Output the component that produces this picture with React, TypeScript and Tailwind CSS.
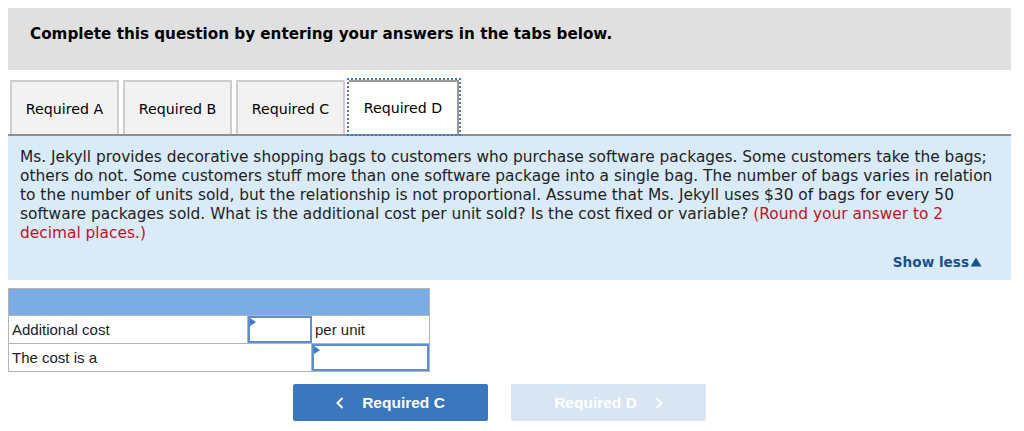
export default function App() {
  const tabs = ["Required A", "Required B", "Required C"];

  return (
    <div className="min-h-[431px] w-[1024px] bg-white pl-2 pr-[13px] pt-2 font-['DejaVu_Sans',Verdana,sans-serif] text-[#222]">
      <div className="flex h-[62px] items-center bg-[#e0e0e0] pb-[9px] pl-[22px]">
        <p className="text-[15.2px] font-bold text-black">Complete this question by entering your answers in the tabs below.</p>
      </div>

      <div className="mt-[10px] flex items-end border-b-2 border-[#8f8f8f] pl-[2px]">
        {tabs.map((t) => (
          <div
            key={t}
            className="mr-1 flex h-[54px] w-[109px] items-center justify-center border-2 border-b-0 border-[#cdcdcd] bg-[#f2f2f2] pt-[3px] text-[14.2px] text-black"
          >
            {t}
          </div>
        ))}
        <div className="-mb-[2px] -mt-[2px] ml-[-2px] h-[58px] w-[114px] border-2 border-dotted border-[#3d7bc8]">
          <div className="flex h-full items-center justify-center border-r-2 border-t-2 border-[#9a9a9a] bg-white pt-[1px] text-[14.2px] text-black">
            Required D
          </div>
        </div>
      </div>

      <div className="bg-[#d9ebf9] px-3 pb-[8px] pt-[12px]">
        <p className="text-[15.4px] leading-[19px] text-[#222]">
          Ms. Jekyll provides decorative shopping bags to customers who purchase software packages. Some customers take the bags; others do not. Some customers stuff more than one software package into a single bag. The number of bags varies in relation to the number of units sold, but the relationship is not proportional. Assume that Ms. Jekyll uses $30 of bags for every 50 software packages sold. What is the additional cost per unit sold? Is the cost fixed or variable?{" "}
          <span className="text-[#c1121c]">(Round your answer to 2 decimal places.)</span>
        </p>
        <div className="mt-[9px] flex justify-end pr-[17px]">
          <span className="flex items-center text-[13.6px] font-bold text-[#1c4f8f]">
            Show less
            <svg width="12" height="10" viewBox="0 0 12 10" className="ml-[1px]">
              <path d="M6 0.5L11.5 9.5H0.5Z" fill="#1c4f8f" />
            </svg>
          </span>
        </div>
      </div>

      <div className="mt-[8px] w-[422px] border border-[#b5b5b5] font-['Liberation_Sans',Arial,sans-serif] text-[15px] text-[#222]">
        <div className="h-[26px] bg-[#7aade4]" />
        <div className="flex h-[28px] border-t border-[#b5b5b5]">
          <div className="flex w-[239px] items-center border-r border-[#b5b5b5] pl-[3px]">Additional cost</div>
          <div className="relative w-[64px] border-2 border-[#5d8fcf] bg-white">
            <span className="absolute left-0 top-0 h-0 w-0 border-y-[4px] border-l-[6px] border-y-transparent border-l-[#3d7bc8]" />
          </div>
          <div className="flex flex-1 items-center pl-[3px]">per unit</div>
        </div>
        <div className="flex h-[28px] border-t border-[#b5b5b5]">
          <div className="flex w-[303px] items-center border-r border-[#b5b5b5] pl-[3px]">The cost is a</div>
          <div className="relative flex-1 border-2 border-[#5d8fcf] bg-white">
            <span className="absolute left-0 top-0 h-0 w-0 border-y-[4px] border-l-[6px] border-y-transparent border-l-[#3d7bc8]" />
          </div>
        </div>
      </div>

      <div className="mt-[12px] flex justify-center gap-[23px] pr-[20px] font-['Liberation_Sans',Arial,sans-serif]">
        <button className="flex h-[37px] w-[195px] items-center justify-center gap-[18px] rounded-[2px] bg-[#3b77bc] text-[15.5px] font-bold text-white">
          <svg width="8" height="12" viewBox="0 0 8 12" fill="none" stroke="white" strokeWidth="2">
            <path d="M6.5 1L1.5 6l5 5" />
          </svg>
          Required C
        </button>
        <button className="flex h-[37px] w-[195px] items-center justify-center gap-[18px] rounded-[2px] bg-[#d9e5f2] text-[15.5px] font-bold text-white">
          Required D
          <svg width="8" height="12" viewBox="0 0 8 12" fill="none" stroke="white" strokeWidth="2">
            <path d="M1.5 1l5 5-5 5" />
          </svg>
        </button>
      </div>
    </div>
  );
}
